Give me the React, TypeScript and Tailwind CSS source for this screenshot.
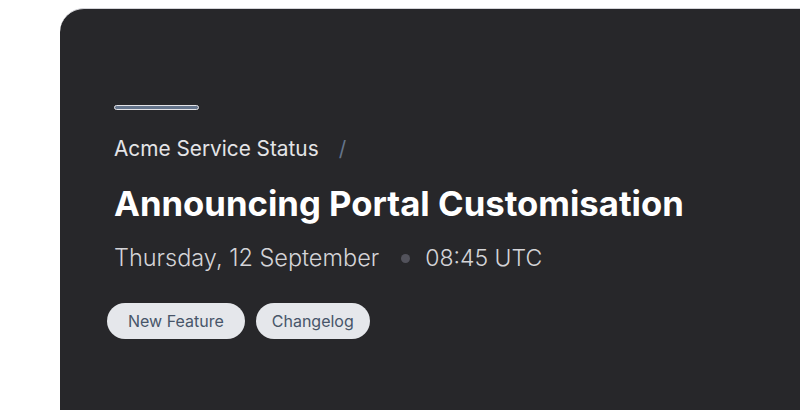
export default function App() {
  return (
    <div className="w-[800px] h-[410px] bg-white overflow-hidden pl-[60px] pt-[8px]" style={{ fontFamily: 'Inter, "Noto Sans", sans-serif' }}>
      <div className="w-[800px] h-[500px] bg-[#27272a] rounded-tl-[24px] border-t border-[#d4d4d8] pl-[54px] pt-[96px]">
        <div className="w-[85px] h-[5px] rounded-full border border-[#e4e4e7] bg-[#64748b]" />
        <div className="mt-[25px] flex items-center h-[28px] text-[20.8px] text-[#e4e4e7]">
          <span>Acme Service Status</span>
          <span className="ml-[20px] text-[#64748b]">/</span>
        </div>
        <h1 className="mt-[20px] h-[40px] leading-[40px] text-[34.7px] font-bold text-white">Announcing Portal Customisation</h1>
        <div className="mt-[19px] flex items-center h-[32px] text-[23.5px] font-light text-[#d4d4d8]">
          <span>Thursday, 12 September</span>
          <span className="ml-[22px] mr-[15px] w-[9px] h-[9px] rounded-full bg-[#52525b]" />
          <span className="text-[23px]">08:45 UTC</span>
        </div>
        <div className="mt-[29px] -ml-[7px] flex gap-[11px]">
          <span className="h-[36px] px-[21px] flex items-center rounded-full bg-[#e5e7eb] text-[16px] text-[#475569]">New Feature</span>
          <span className="h-[36px] px-[16px] flex items-center rounded-full bg-[#e5e7eb] text-[16px] text-[#475569]">Changelog</span>
        </div>
      </div>
    </div>
  );
}
